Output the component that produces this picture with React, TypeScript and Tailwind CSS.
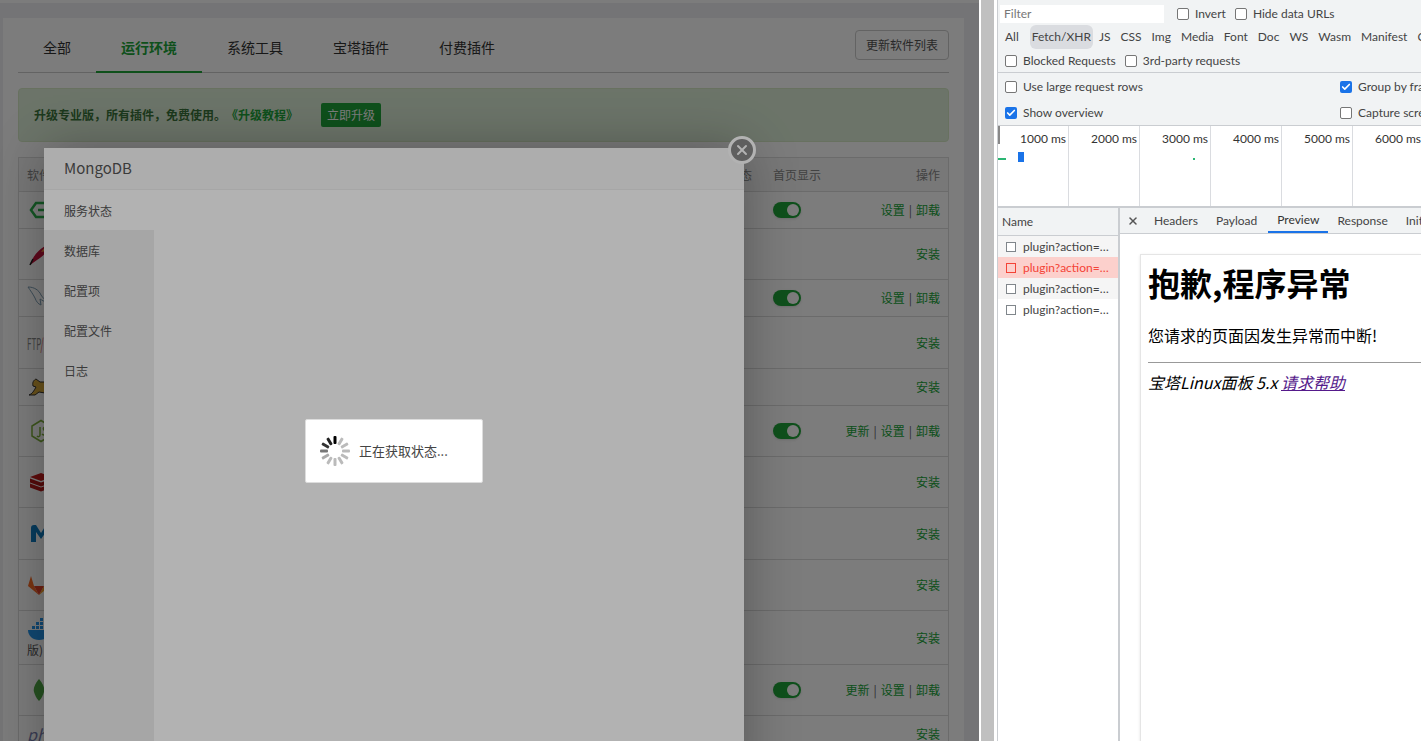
import { X, Check } from "lucide-react";
import type { ReactNode } from "react";

const cjk = { fontFamily: '"Noto Sans CJK SC", "Noto Sans", sans-serif' };
const dev = { fontFamily: 'Lato, "Noto Sans CJK SC", sans-serif' };

function Nginx() {
  return (
    <svg viewBox="0 0 24 24" className="size-6" fill="none" stroke="#2bb24c" strokeWidth="2.5">
      <path d="M9 5h12l5 7-5 7H9l-5-7z" />
      <path d="M11 12h10" />
    </svg>
  );
}
function Feather() {
  return (
    <svg viewBox="0 0 24 24" className="size-6">
      <path d="M3 23C6 14 12 6 24 1c-2 7-6 12-14 17z" fill="#c4143c" />
      <path d="M14 10C17 6 20 3 24 1c-1 3-3 6-5 8z" fill="#f39a3c" />
      <path d="M3 23 6 17" stroke="#222" strokeWidth="1.5" />
    </svg>
  );
}
function Dolphin() {
  return (
    <svg viewBox="0 0 24 24" className="size-6" fill="none" stroke="#7fa0b5" strokeWidth="1">
      <path d="M1 1c6 0 11 3 13 8 2 3 4 5 7 7-4 0-6-2-8-3l1 6c-3-1-5-4-6-7C6 8 3 4 1 1z" />
    </svg>
  );
}
function Tomcat() {
  return (
    <svg viewBox="0 0 24 24" className="size-6">
      <path d="M2 20c3-1 5-4 7-8l-3-1c-1-4 1-6 3-7l4 3h5l4-3 1 8-5 6-6-1-4 3z" fill="#d8a93a" stroke="#333" strokeWidth="1" />
    </svg>
  );
}
function Node() {
  return (
    <svg viewBox="0 0 24 24" className="ml-0.5 size-6" fill="none" stroke="#7fb13c" strokeWidth="1.5">
      <path d="M12 1.500 21 7v10l-9 5.500L3 17V7z" />
      <path d="M11 8v8c0 2-2 2-3 1M19 9c-3-2-6 0-4 2s4 2 2 4-4 0-4 0" />
    </svg>
  );
}
function Redis() {
  return (
    <svg viewBox="0 0 24 24" className="ml-0.5 size-6" fill="#c41e1e">
      <path d="M1 7 12 3l11 4-11 4z" />
      <path d="M1 8.500 12 12.500 23 8.500v4L12 16.500 1 12.500z" fill="#b01818" />
      <path d="M1 13.500 12 17.500 23 13.500v4L12 21.500 1 17.500z" fill="#b81a1a" />
    </svg>
  );
}
function Memcached() {
  return (
    <svg viewBox="0 0 24 24" className="ml-0.5 size-6">
      <path d="M2 20V6c0-2 1-3 3-3h2l5 8 5-8h2c2 0 3 1 3 3v14h-5V10l-5 7-5-7v10z" fill="#0f7dc2" />
    </svg>
  );
}
function Gitlab() {
  return (
    <svg viewBox="0 0 24 24" className="size-6">
      <path d="M12 22 1 13l3-10 3 10z" fill="#fc6d26" />
      <path d="M12 22 23 13l-3-10-3 10z" fill="#fca326" />
      <path d="M12 22 7 13h10z" fill="#e24329" />
    </svg>
  );
}
function Docker() {
  return (
    <svg viewBox="0 0 24 24" className="size-6" fill="#2496ed">
      <path d="M1 12h20c1 0 2 0 3-1-1 6-5 11-12 11C6 22 1 18 1 12z" />
      <path d="M5 8h3v3H5zM9 8h3v3H9zM13 8h3v3h-3zM9 4h3v3H9zM13 4h3v3h-3zM13 0h3v3h-3z" />
    </svg>
  );
}
function Mongo() {
  return (
    <svg viewBox="0 0 24 24" className="size-6">
      <path d="M12 1c4 5 6 9 5 13-1 3-2 6-5 9-3-3-4-6-5-9-1-4 1-8 5-13z" fill="#4fa845" />
    </svg>
  );
}

const ops = ["设置", "卸载"];
const ops3 = ["更新", "设置", "卸载"];

type Row = { h: string; icon: ReactNode; on?: boolean; actions: string[] };

const rows: Row[] = [
  { h: "h-9", icon: <Nginx />, on: true, actions: ops },
  { h: "h-12.5", icon: <Feather />, actions: ["安装"] },
  { h: "h-9", icon: <Dolphin />, on: true, actions: ops },
  {
    h: "h-12.75",
    icon: (
      <span className="inline-block origin-left scale-x-50 text-base text-[#888]">
        FTP<span className="text-[#e05050]">/</span>
      </span>
    ),
    actions: ["安装"],
  },
  { h: "h-9", icon: <Tomcat />, actions: ["安装"] },
  { h: "h-12.5", icon: <Node />, on: true, actions: ops3 },
  { h: "h-12.5", icon: <Redis />, actions: ["安装"] },
  { h: "h-12.75", icon: <Memcached />, actions: ["安装"] },
  { h: "h-12.5", icon: <Gitlab />, actions: ["安装"] },
  {
    h: "h-13.25",
    icon: (
      <div className="flex flex-col">
        <Docker />
        <span className="text-xs leading-4 text-[#555]">版)</span>
      </div>
    ),
    actions: ["安装"],
  },
  { h: "h-12.5", icon: <Mongo />, on: true, actions: ops3 },
  { h: "h-9", icon: <span className="text-base italic text-[#7a7fb0]">php</span>, actions: ["安装"] },
];

function Toggle() {
  return (
    <div className="flex h-4 w-7 items-center justify-end rounded-full bg-[#20a53a] pr-0.5 shadow-sm">
      <div className="size-3 rounded-full bg-white" />
    </div>
  );
}

function Page() {
  return (
    <div className="flex h-full flex-col bg-[#eff0f2]">
      <div className="h-0.75 shrink-0 bg-white" />
      <div className="mt-3.75 ml-0.75 w-[961px] flex-1 bg-white px-[15px]">
        <div className="mt-3 flex h-[43px] items-start justify-between border-b border-[#ccc]">
          <div className="flex text-sm text-[#333]">
            <div className="w-[78px] pl-[25px] leading-8.5">全部</div>
            {["运行环境", "系统工具", "宝塔插件", "付费插件"].map((t, i) => (
              <div
                key={t}
                className={
                  i === 0
                    ? "h-[43px] w-[106px] border-b-2 border-[#20a53a] text-center leading-8.5 font-bold text-[#20a53a]"
                    : "h-[43px] w-[106px] text-center leading-8.5"
                }
              >
                {t}
              </div>
            ))}
          </div>
          <button className="h-7.5 rounded-sm border border-[#ccc] px-2.5 text-xs text-[#555]">更新软件列表</button>
        </div>
        <div className="mt-3.75 flex h-13.5 items-center rounded-sm border border-[#d6e9c6] bg-[#dff0d8] pl-3.75 text-xs font-bold text-[#3c763d]">
          <span>升级专业版，所有插件，免费使用。</span>
          <span className="text-[#20a53a]">《升级教程》</span>
          <span className="ml-5.75 rounded-xs bg-[#20a53a] px-1.5 py-1 font-normal text-white">立即升级</span>
        </div>
        <div className="mt-3.75 border border-b-0 border-[#ddd] text-xs">
          <div className="flex h-8.5 items-center border-b border-[#ddd] bg-[#f6f6f6] pl-2 text-[#888]">
            <span className="flex-1">软件名称</span>
            <span className="w-11">状态</span>
            <span className="flex w-44 justify-between pr-2 pl-px">
              <span>首页显示</span>
              <span>操作</span>
            </span>
          </div>
          {rows.map((r, i) => (
            <div key={i} className={`box-content flex items-center border-b border-[#ddd] pl-2 ${r.h}`}>
              <div className="flex-1">{r.icon}</div>
              <div className="flex w-44 items-center">
                <div className="ml-px w-7 shrink-0">{r.on && <Toggle />}</div>
                <div className="flex flex-1 justify-end gap-1 pr-2 text-[#20a53a]">
                  {r.actions.map((a, j) => (
                    <span key={a} className="flex gap-1">
                      {j > 0 && <span className="text-[#666]">|</span>}
                      {a}
                    </span>
                  ))}
                </div>
              </div>
            </div>
          ))}
        </div>
      </div>
    </div>
  );
}

function Modal() {
  const items = ["服务状态", "数据库", "配置项", "配置文件", "日志"];
  return (
    <div className="absolute top-[148px] left-[44px] h-[640px] w-[700px] bg-white shadow-[1px_1px_50px_rgba(0,0,0,0.3)]">
      <div className="flex h-[42px] items-center border-b border-[#eee] bg-[#f8f8f8] pl-5 text-[15px] text-[#555]">MongoDB</div>
      <div className="h-full w-[110px] bg-[#eeeeee] text-xs text-[#555]">
        {items.map((t, i) => (
          <div key={t} className={i === 0 ? "flex h-10 items-center bg-white pt-0.5 pl-5" : "flex h-10 items-center pt-0.5 pl-5"}>
            {t}
          </div>
        ))}
      </div>
      <div className="absolute -top-3 -right-3 flex size-7 items-center justify-center rounded-full border-3 border-white bg-[#888]">
        <X size={16} strokeWidth={3} className="text-white" />
      </div>
    </div>
  );
}

function Spinner() {
  const shades = ["#000", "#bbb", "#bbb", "#bbb", "#bbb", "#bbb", "#bbb", "#bbb", "#aaa", "#777", "#333", "#222"];
  return (
    <svg viewBox="0 0 32 32" className="size-8">
      {shades.map((c, i) => (
        <rect key={i} x="14.500" y="1" width="3" height="8" rx="1" fill={c} transform={`rotate(${i * 30} 16 16)`} />
      ))}
    </svg>
  );
}

function Loading() {
  return (
    <div className="absolute top-[419px] left-[305px] flex h-16 w-[178px] items-center gap-2 rounded-xs border border-[#ddd] bg-white pl-3.25 text-[13px] text-[#444]">
      <Spinner />
      <span>正在获取状态...</span>
    </div>
  );
}

function Box({ checked }: { checked?: boolean }) {
  return checked ? (
    <div className="flex size-3 shrink-0 items-center justify-center rounded-xs bg-[#1a73e8]">
      <Check size={10} strokeWidth={4} className="text-white" />
    </div>
  ) : (
    <div className="size-3 shrink-0 rounded-xs border border-[#767676] bg-white" />
  );
}

function Opt({ label, checked, className = "" }: { label: string; checked?: boolean; className?: string }) {
  return (
    <div className={`flex items-center gap-1.5 whitespace-nowrap ${className}`}>
      <Box checked={checked} />
      <span>{label}</span>
    </div>
  );
}

function DevTools() {
  const types = ["JS", "CSS", "Img", "Media", "Font", "Doc", "WS", "Wasm", "Manifest", "Other"];
  const ticks = ["1000 ms", "2000 ms", "3000 ms", "4000 ms", "5000 ms", "6000 ms"];
  const tabs = ["Headers", "Payload", "Preview", "Response", "Initiator"];
  return (
    <div className="flex min-w-0 flex-1 flex-col overflow-hidden bg-white text-xs text-[#444]" style={dev}>
      <div className="h-[73px] shrink-0 overflow-hidden border-b border-[#cacdd1] bg-[#f1f3f4]">
        <div className="flex h-6 items-center pt-1">
          <div className="ml-0.5 flex h-[18px] w-[164px] items-center bg-white pl-1 text-[#777]">Filter</div>
          <Opt label="Invert" className="ml-3.25" />
          <Opt label="Hide data URLs" className="ml-2.25" />
        </div>
        <div className="flex h-6 items-center pt-0.5 pl-1.75 whitespace-nowrap">
          <span>All</span>
          <span className="mx-1.5 h-4 w-px bg-[#cacdd1]" />
          <span className="mr-1.5 -ml-px rounded-md bg-[#dadce0] px-0.5 py-1">Fetch/XHR</span>
          <div className="flex gap-2.5">
            {types.map((t) => (
              <span key={t}>{t}</span>
            ))}
          </div>
        </div>
        <div className="flex h-6 items-center gap-2.25 pt-0.5 pl-1.75">
          <Opt label="Blocked Requests" />
          <Opt label="3rd-party requests" />
        </div>
      </div>
      <div className="h-[53px] shrink-0 border-b border-[#cacdd1] bg-[#f1f3f4] pt-0.5 pl-1.75 whitespace-nowrap">
        <div className="flex h-6 items-center">
          <div className="w-[335px] shrink-0">
            <Opt label="Use large request rows" />
          </div>
          <Opt label="Group by frame" checked />
        </div>
        <div className="mt-0.5 flex h-6 items-center">
          <div className="w-[335px] shrink-0">
            <Opt label="Show overview" checked />
          </div>
          <Opt label="Capture screenshots" />
        </div>
      </div>
      <div className="relative flex h-[82px] shrink-0 border-b-2 border-[#cacdd1] bg-white">
        {ticks.map((t) => (
          <div key={t} className="h-full w-[71px] shrink-0 border-r border-[#dadce0] pt-1.25 pr-0.5 text-right whitespace-nowrap text-[#333]">
            {t}
          </div>
        ))}
        <div className="absolute top-0 left-0 h-4.5 w-0.5 bg-[#888]" />
        <div className="absolute top-8 left-0 h-0.5 w-2 bg-[#2bb673]" />
        <div className="absolute top-6.5 left-5 h-2.5 w-1.5 bg-[#1a73e8]" />
        <div className="absolute top-8 left-[195px] size-0.5 bg-[#2bb673]" />
      </div>
      <div className="flex min-h-0 flex-1">
        <div className="w-[122px] shrink-0 border-r-2 border-[#cacdd1]">
          <div className="flex h-7 items-center border-b border-[#cacdd1] bg-[#f1f3f4] pl-1">Name</div>
          {["bg-[#f5f5f5]", "bg-[#fcd0cc] text-[#f44336]", "bg-[#f5f5f5]", "bg-white"].map((c, i) => (
            <div key={i} className={`flex h-[21px] items-center gap-1.75 pl-2 ${c}`}>
              <div className={i === 1 ? "size-2.5 shrink-0 border border-[#f44336]" : "size-2.5 shrink-0 border border-[#80868b] bg-white"} />
              <span className="truncate pr-1.5">plugin?action=getPluginInfo</span>
            </div>
          ))}
        </div>
        <div className="flex min-w-0 flex-1 flex-col">
          <div className="flex h-[26px] shrink-0 items-center border-b border-[#cacdd1] bg-[#f1f3f4] whitespace-nowrap">
            <X size={12} strokeWidth={3} className="mr-1.5 ml-1.75 shrink-0 text-[#555]" />
            {tabs.map((t) => (
              <div
                key={t}
                className={
                  t === "Preview"
                    ? "ml-0.5 flex h-full items-center border-b-2 border-[#1a73e8] px-2.25 text-[#333]"
                    : "flex h-full items-center px-2.25"
                }
              >
                {t}
              </div>
            ))}
          </div>
          <div className="flex-1 pt-5 pl-5">
            <div className="h-full border-t border-l border-[#e5e5e5] pt-2.25 pl-1.75 whitespace-nowrap text-black shadow-sm" style={cjk}>
              <h1 className="text-[32px] leading-9 font-bold">抱歉,程序异常</h1>
              <p className="mt-5.75 text-base leading-6">您请求的页面因发生异常而中断!</p>
              <hr className="mt-3.75 border-[#999]" />
              <p className="mt-1.75 text-base leading-6 italic">
                宝塔Linux面板 5.x <span className="text-[#551a8b] underline">请求帮助</span>
              </p>
            </div>
          </div>
        </div>
      </div>
    </div>
  );
}

export default function App() {
  return (
    <div className="flex h-screen overflow-hidden bg-white" style={cjk}>
      <div className="relative w-[979px] shrink-0 overflow-hidden">
        <Page />
        <div className="absolute inset-0 bg-black/30" />
        <Modal />
        <div className="absolute inset-0 bg-black/30" />
        <Loading />
      </div>
      <div className="ml-0.5 w-[13px] shrink-0 bg-[#c0c0c0]" />
      <div className="w-[4px] shrink-0 border-r border-[#cacdd1] bg-white" />
      <DevTools />
    </div>
  );
}
